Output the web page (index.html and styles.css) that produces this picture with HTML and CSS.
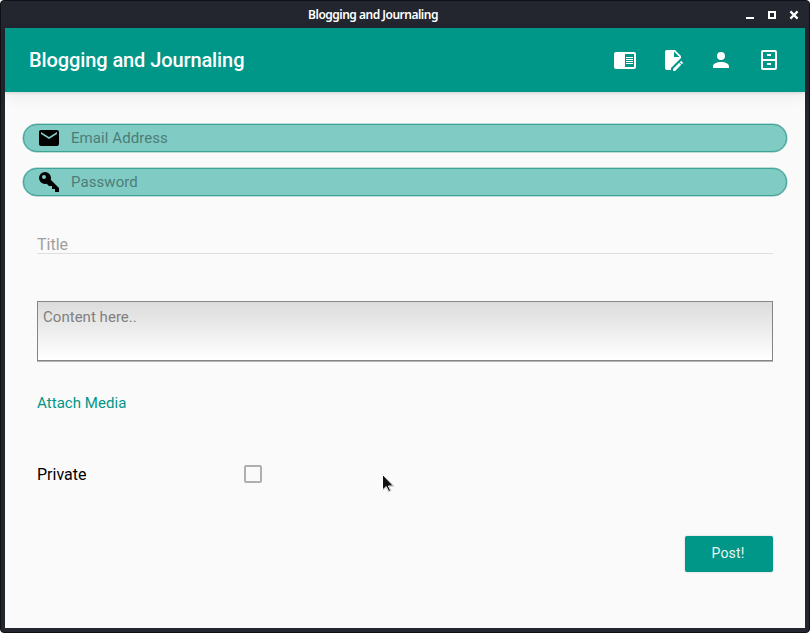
FILE: index.html
```html
<!DOCTYPE html>
<html lang="en">
<head>
<meta charset="utf-8">
<title>Blogging and Journaling</title>
<link rel="stylesheet" href="styles.css">
</head>
<body>
<div class="window">
  <div class="titlebar">
    <span class="caption">Blogging and Journaling</span>
    <div class="controls">
      <svg viewBox="0 0 8 8" shape-rendering="crispEdges"><path d="M0 6h8v2H0z"/></svg>
      <svg viewBox="0 0 8 8" shape-rendering="crispEdges"><path fill-rule="evenodd" d="M0 0h8v8H0zM2 2v4h4V2z"/></svg>
      <svg class="close" viewBox="0 0 8 8"><path d="M.4.4l7.200 7.200M7.600.4L.4 7.600" stroke="#fff" stroke-width="2.200"/></svg>
    </div>
  </div>
  <div class="app">
    <header class="toolbar">
      <h1>Blogging and Journaling</h1>
      <nav>
        <svg viewBox="0 0 24 24"><path fill-rule="evenodd" d="M21 4H3C1.900 4 1 4.900 1 6v13c0 1.100.9 2 2 2h18c1.100 0 2-.9 2-2V6c0-1.100-.9-2-2-2zM21 19h-9V6h9zM13 9h7v1h-7zM13 11h7v1h-7zM13 13h7v1h-7zM13 15h7v1h-7z"/></svg>
        <svg viewBox="0 0 24 24"><path d="M6,2A2,2 0 0,0 4,4V20A2,2 0 0,0 6,22H10V20.090L20,10.090V8L14,2H6M13,3.500L18.500,9H13V3.500M20.150,13C20,13 19.860,13.050 19.750,13.160L18.730,14.180L20.820,16.260L21.840,15.250C22.050,15.030 22.050,14.670 21.840,14.460L20.540,13.160C20.430,13.050 20.290,13 20.150,13M18.140,14.770L12,20.920V23H14.080L20.230,16.850L18.140,14.770Z"/></svg>
        <svg viewBox="0 0 24 24"><path d="M12,4A4,4 0 0,1 16,8A4,4 0 0,1 12,12A4,4 0 0,1 8,8A4,4 0 0,1 12,4M12,14C16.420,14 20,15.790 20,18V20H4V18C4,15.790 7.580,14 12,14Z"/></svg>
        <svg viewBox="0 0 24 24"><path fill-rule="evenodd" d="M6 2h12a2 2 0 0 1 2 2v16a2 2 0 0 1-2 2H6a2 2 0 0 1-2-2V4a2 2 0 0 1 2-2zM6 4v7h12V4zM6 13v7h12v-7zM10 6h4v2h-4zM10 15h4v2h-4z"/></svg>
      </nav>
    </header>
    <main>
      <div class="pill">
        <svg viewBox="0 0 24 24"><path d="M20,8L12,13L4,8V6L12,11L20,6M20,4H4C2.890,4 2,4.890 2,6V18A2,2 0 0,0 4,20H20A2,2 0 0,0 22,18V6C22,4.890 21.100,4 20,4Z"/></svg>
        <span>Email Address</span>
      </div>
      <div class="pill">
        <svg viewBox="0 0 24 24"><path d="M22,18V22H18V19H15V16H12L9.740,13.740C9.190,13.910 8.610,14 8,14A6,6 0 0,1 2,8A6,6 0 0,1 8,2A6,6 0 0,1 14,8C14,8.610 13.910,9.190 13.740,9.740L22,18M7,5A2,2 0 0,0 5,7A2,2 0 0,0 7,9A2,2 0 0,0 9,7A2,2 0 0,0 7,5Z"/></svg>
        <span>Password</span>
      </div>
      <div class="title-field">Title</div>
      <div class="content-field">Content here..</div>
      <div class="attach">Attach Media</div>
      <div class="private"><span>Private</span><i class="checkbox"></i></div>
      <div class="actions"><button type="button">Post!</button></div>
    </main>
  </div>
  <svg class="pointer" viewBox="0 0 14 21"><path d="M1.500 1.500v15.500l3.700-3.400 2.600 5 2-1-2.400-4.600h5.100z" fill="#111" stroke="#fff" stroke-width="1"/></svg>
</div>
</body>
</html>
```

FILE: styles.css
```css
* { box-sizing: border-box; }
body { margin: 0; background: #fff; font-family: Roboto, "Liberation Sans", sans-serif; }
.window {
  position: relative;
  width: 810px;
  height: 633px;
  padding: 0 4px 4px;
  background: #23252f;
  border: 1px solid #0f1014;
  border-radius: 4px;
  overflow: hidden;
}
.titlebar {
  display: grid;
  grid-template-columns: 1fr auto 1fr;
  align-items: center;
  height: 27px;
  color: #fff;
}
.caption {
  grid-column: 2;
  margin-left: -64px;
  font: 600 12px/26px "Noto Sans", sans-serif;
  letter-spacing: -.5px;
  white-space: nowrap;
}
.controls { display: flex; justify-content: flex-end; gap: 14px; padding-right: 7px; }
.controls svg { width: 8px; height: 8px; fill: #fff; }
.controls .close { overflow: visible; }
.app { height: 600px; background: #fafafa; }
.toolbar {
  display: flex;
  align-items: center;
  justify-content: space-between;
  height: 64px;
  padding: 0 24px;
  background: #009688;
  color: #fff;
  box-shadow: 0 1px 3px rgba(0,0,0,.13), 0 5px 14px rgba(0,0,0,.06);
}
.toolbar h1 { margin: 0; font-size: 20px; font-weight: 500; letter-spacing: -.1px; }
nav { display: flex; gap: 24px; }
nav svg { width: 24px; height: 24px; fill: #fff; }
main { padding: 32px 18px 0; }
.pill {
  display: flex;
  align-items: center;
  gap: 10px;
  height: 28px;
  margin: 0 0 16px;
  padding-left: 13px;
  border: 1px solid #3fa398;
  border-radius: 14px;
  background: #80cbc4;
  box-shadow: 0 0 0 .5px #7ebdb6;
  color: #4d7d78;
  font-size: 15px;
  letter-spacing: .07px;
}
.pill svg { width: 24px; height: 24px; fill: #000; }
.title-field {
  height: 24px;
  margin: 34px 14px 0;
  padding-top: 5px;
  border-bottom: 1px solid #dedede;
  color: #9f9f9f;
  font-size: 16px;
  line-height: 19px;
}
.content-field {
  height: 60px;
  margin: 47px 14px 0;
  padding: 6px 5px;
  border: 1px solid #858585;
  background: linear-gradient(#dcdcdc, #fff);
  box-shadow: 0 1px 0 #b5b5b5;
  color: #808080;
  font-size: 15px;
  line-height: 18px;
  letter-spacing: .03px;
}
.attach { margin: 33px 14px 0; color: #009688; font-size: 15px; line-height: 18px; letter-spacing: .05px; }
.private { display: flex; align-items: center; margin: 53px 14px 0; height: 18px; font-size: 16px; color: #000; }
.private span { width: 207px; }
.checkbox { width: 18px; height: 18px; border: 2px solid #afafaf; border-radius: 2px; }
.actions { display: flex; justify-content: flex-end; margin: 53px 14px 0; }
button {
  width: 88px;
  height: 36px;
  padding: 0 2px 2px 0;
  border: 0;
  border-radius: 2px;
  background: #009688;
  color: #e8f5f4;
  font: 14px Roboto, sans-serif;
  letter-spacing: .15px;
  box-shadow: 0 0 2px rgba(0,0,0,.22);
}
.pointer { position: absolute; left: 380px; top: 472px; width: 14px; height: 21px; filter: drop-shadow(0 0 .6px #555); }
```
